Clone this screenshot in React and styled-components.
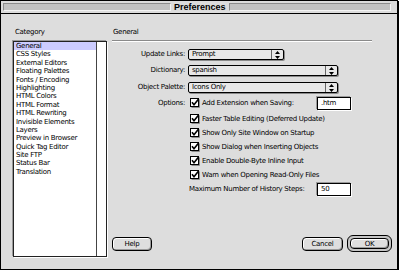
import React from 'react'
import styled, { createGlobalStyle } from 'styled-components'

const font = `"DejaVu Sans", "Liberation Sans", Arial, sans-serif`

const GlobalStyle = createGlobalStyle`
    html, body {
        margin: 0;
        padding: 0;
        background: #ffffff;
    }
    body {
        font-family: ${font};
        font-size: 7px;
        letter-spacing: -0.3px;
        color: #000;
    }
`

const Window = styled.div`
    width: 398px;
    height: 270px;
    box-sizing: border-box;
    border: 1px solid #000;
    box-shadow: 1px 1px 0 #000;
    background: #dddddd;
    display: flex;
    flex-direction: column;
`

const TitleBar = styled.div`
    height: 13px;
    box-sizing: border-box;
    border-bottom: 1px solid #000;
    background: #dcdcdc;
    display: flex;
    align-items: center;
    gap: 2px;
    padding: 0 6px 0 2px;
`

const Stripe = styled.div`
    flex: ${p => (p.$w ? `0 0 ${p.$w}px` : '1')};
    height: 8px;
    box-sizing: border-box;
    background: #c2c2c2;
    border-top: 1px solid #8c8c8c;
    border-left: 1px solid #8c8c8c;
    border-bottom: 1px solid #f4f4f4;
    border-right: 1px solid #f4f4f4;
`

const Title = styled.div`
    font-family: "Liberation Sans", Arial, sans-serif;
    font-size: 9px;
    font-weight: bold;
    letter-spacing: 0;
    line-height: 12px;
    padding: 0 1px;
`

const Body = styled.div`
    flex: 1;
    display: grid;
    grid-template-columns: 94px 1fr;
    column-gap: 5px;
    padding: 14px 5px 12px 12px;
    min-height: 0;
`

const Column = styled.div`
    display: flex;
    flex-direction: column;
    min-height: 0;
`

const Caption = styled.div`
    line-height: 9px;
    padding-left: ${p => p.$pl || 0}px;
`

const ListBox = styled.div`
    flex: 1;
    margin-top: 4px;
    display: flex;
    background: #fff;
    border: 1px solid #222;
    box-shadow: -1px -1px 0 #9a9a9a, 1px 1px 0 #fff;
`

const Items = styled.div`
    flex: 1;
`

const Item = styled.div`
    height: 8.4px;
    line-height: 8.4px;
    padding-left: 2px;
    white-space: nowrap;
    background: ${p => (p.$selected ? '#ccccff' : 'transparent')};
`

const ScrollTrack = styled.div`
    width: 9px;
    border-left: 1px solid #444;
    background: #fff;
`

const Rule = styled.div`
    margin: 3px 20px 0 0;
    border-top: 1px solid #8a8a8a;
    border-bottom: 1px solid #fff;
`

const FieldRow = styled.div`
    display: grid;
    grid-template-columns: 73px 1fr;
    column-gap: 3px;
    align-items: start;
    margin-top: ${p => p.$mt}px;
`

const FieldLabel = styled.div`
    text-align: right;
    line-height: ${p => p.$h}px;
    white-space: nowrap;
`

const Popup = styled.div`
    width: ${p => p.$w}px;
    height: 11px;
    box-sizing: border-box;
    border: 1px solid #000;
    border-radius: 2px;
    background: #e8e8e8;
    box-shadow: 1px 1px 0 #8a8a8a;
    display: flex;
    align-items: center;
`

const PopupText = styled.div`
    flex: 1;
    padding-left: 3px;
    line-height: 9px;
`

const PopupArrows = styled.div`
    width: 11px;
    align-self: stretch;
    border-left: 1px solid #666;
    display: flex;
    align-items: center;
    justify-content: center;
`

const Options = styled.div`
    display: flex;
    flex-direction: column;
`

const CheckRow = styled.div`
    display: flex;
    align-items: center;
    gap: 2px;
    height: 14px;
    padding-left: ${p => p.$pl ?? 2}px;
    width: ${p => (p.$w ? `${p.$w}px` : 'auto')};
    margin-top: ${p => p.$mt || 0}px;
    white-space: nowrap;
`

const TextField = styled.div`
    margin-left: auto;
    width: 34px;
    height: 13px;
    box-sizing: border-box;
    background: #fff;
    border: 1px solid #000;
    box-shadow: -1px -1px 0 #9a9a9a, 1px 1px 0 #fff;
    padding-left: 3px;
    line-height: 11px;
`

const Footer = styled.div`
    margin-top: auto;
    margin-bottom: 5px;
    display: flex;
    align-items: center;
    gap: 4px;
`

const Button = styled.button`
    width: ${p => p.$w}px;
    height: ${p => p.$h || 14}px;
    box-sizing: border-box;
    padding: 0;
    border: 1px solid #000;
    border-radius: 4px;
    background: #dedede;
    box-shadow: inset 1px 1px 0 #fff, inset -1px -1px 0 #9a9a9a;
    font-family: ${font};
    font-size: 7px;
    letter-spacing: -0.3px;
    color: #000;
    margin-right: ${p => (p.$push ? 'auto' : '0')};
`

const DefaultRing = styled.div`
    padding: 2px;
    border: 1px solid #000;
    border-radius: 6px;
    background: #c4c4c4;
    display: flex;
`

const Arrows = () => (
    <svg width="5" height="8" viewBox="0 0 5 8">
        <path d="M2.5 0 L5 3 L0 3 Z M0 5 L5 5 L2.5 8 Z" fill="#000" />
    </svg>
)

const Check = () => (
    <svg width="10" height="10" viewBox="0 0 10 10">
        <rect x="0.5" y="0.5" width="8" height="8" fill="#fff" stroke="#000" />
        <path d="M9.5 1.5 V9.5 H1.5" stroke="#8a8a8a" fill="none" />
        <path d="M2 4.3 L4 6.8 L8.6 1" stroke="#000" strokeWidth="1.6" fill="none" />
    </svg>
)

const categories = [
    'General', 'CSS Styles', 'External Editors', 'Floating Palettes', 'Fonts / Encoding',
    'Highlighting', 'HTML Colors', 'HTML Format', 'HTML Rewriting', 'Invisible Elements',
    'Layers', 'Preview in Browser', 'Quick Tag Editor', 'Site FTP', 'Status Bar', 'Translation',
]

const checks = [
    'Faster Table Editing (Deferred Update)',
    'Show Only Site Window on Startup',
    'Show Dialog when Inserting Objects',
    'Enable Double-Byte Inline Input',
    'Warn when Opening Read-Only Files',
]

const App = () => {
    return (
        <>
            <GlobalStyle />
            <Window>
                <TitleBar>
                    <Stripe $w={168} />
                    <Title>Preferences</Title>
                    <Stripe />
                </TitleBar>
                <Body>
                    <Column>
                        <Caption $pl={2}>Category</Caption>
                        <ListBox>
                            <Items>
                                {categories.map((c, i) => (
                                    <Item key={c} $selected={i === 0}>{c}</Item>
                                ))}
                            </Items>
                            <ScrollTrack />
                        </ListBox>
                    </Column>
                    <Column>
                        <Caption $pl={1}>General</Caption>
                        <Rule />
                        <FieldRow $mt={7}>
                            <FieldLabel $h={11}>Update Links:</FieldLabel>
                            <Popup $w={96}>
                                <PopupText>Prompt</PopupText>
                                <PopupArrows><Arrows /></PopupArrows>
                            </Popup>
                        </FieldRow>
                        <FieldRow $mt={5}>
                            <FieldLabel $h={11}>Dictionary:</FieldLabel>
                            <Popup $w={150}>
                                <PopupText>spanish</PopupText>
                                <PopupArrows><Arrows /></PopupArrows>
                            </Popup>
                        </FieldRow>
                        <FieldRow $mt={6}>
                            <FieldLabel $h={11}>Object Palette:</FieldLabel>
                            <Popup $w={150}>
                                <PopupText>Icons Only</PopupText>
                                <PopupArrows><Arrows /></PopupArrows>
                            </Popup>
                        </FieldRow>
                        <FieldRow $mt={3}>
                            <FieldLabel $h={14}>Options:</FieldLabel>
                            <Options>
                                <CheckRow $w={161}>
                                    <Check />
                                    <span>Add Extension when Saving:</span>
                                    <TextField>.htm</TextField>
                                </CheckRow>
                                {checks.map((c, i) => (
                                    <CheckRow key={c} $mt={i === 0 ? 2 : 0}>
                                        <Check />
                                        <span>{c}</span>
                                    </CheckRow>
                                ))}
                                <CheckRow $w={162} $pl={1}>
                                    <span>Maximum Number of History Steps:</span>
                                    <TextField>50</TextField>
                                </CheckRow>
                            </Options>
                        </FieldRow>
                        <Footer>
                            <Button $w={40} $push>Help</Button>
                            <Button $w={41}>Cancel</Button>
                            <DefaultRing>
                                <Button $w={39} $h={11}>OK</Button>
                            </DefaultRing>
                        </Footer>
                    </Column>
                </Body>
            </Window>
        </>
    )
}

export default App
